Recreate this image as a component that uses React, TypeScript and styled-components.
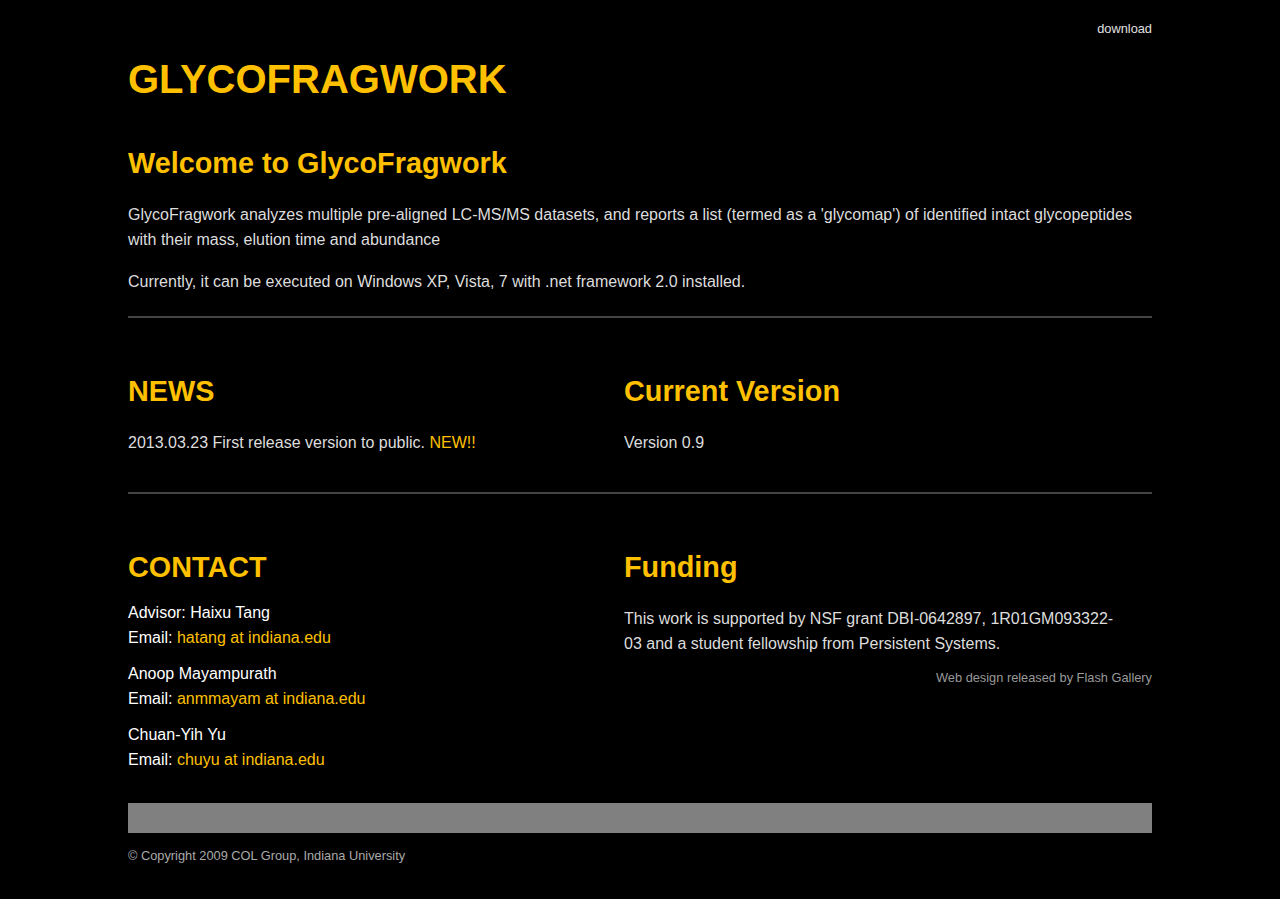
import styled, { createGlobalStyle } from "styled-components";

const GlobalStyle = createGlobalStyle`
    html, body {
        margin: 0;
        padding: 0;
        background: #000;
    }
    body {
        font-family: "Liberation Sans", Arial, Helvetica, sans-serif;
        color: #dddddd;
    }
`;

const Page = styled.div`
    width: 1024px;
    margin: 0 auto;
    padding: 21px 0 30px;
`;

const TopBar = styled.div`
    display: flex;
    justify-content: flex-end;
    height: 16px;
    font-size: 12.8px;
    line-height: 16px;
`;

const TopLink = styled.a`
    color: #e0e0e0;
    text-decoration: none;
`;

const Title = styled.h1`
    margin: 19px 0 0;
    font-size: 40px;
    line-height: 46px;
    font-weight: bold;
    color: #ffc000;
`;

const Heading = styled.h2<{ $gap?: number }>`
    margin: 0 0 ${({ $gap = 23 }) => $gap}px;
    font-size: 28.8px;
    line-height: 32px;
    font-weight: bold;
    color: #ffc000;
`;

const Section = styled.section<{ $top?: number }>`
    padding-top: ${({ $top = 57 }) => $top}px;
`;

const Text = styled.p`
    margin: 0 0 17px;
    font-size: 16px;
    line-height: 25px;
    color: #dddddd;
    &:last-child {
        margin-bottom: 0;
    }
`;

const Highlight = styled.a`
    color: #ffc000;
    text-decoration: none;
`;

const Divider = styled.hr<{ $top: number }>`
    margin: ${({ $top }) => $top}px 0 0;
    border: 0;
    height: 2px;
    background: #444;
`;

const Columns = styled.div`
    display: grid;
    grid-template-columns: 496px 528px;
`;

const Column = styled.div``;

const ContactEntry = styled.p`
    margin: 0 0 11px;
    font-size: 16px;
    line-height: 25px;
    color: #fff;
    &:last-child {
        margin-bottom: 0;
    }
`;

const FundingText = styled(Text)`
    max-width: 496px;
    margin-bottom: 14px;
`;

const Credit = styled.div`
    text-align: right;
    font-size: 12.8px;
    line-height: 16px;
    color: #999;
`;

const FooterBar = styled.div`
    margin-top: 31px;
    height: 30px;
    background: #808080;
`;

const Copyright = styled.div`
    margin-top: 15px;
    font-size: 12.8px;
    line-height: 16px;
    color: #aaa;
`;

const contacts = [
    { name: "Advisor: Haixu Tang", email: "hatang at indiana.edu" },
    { name: "Anoop Mayampurath", email: "anmmayam at indiana.edu" },
    { name: "Chuan-Yih Yu", email: "chuyu at indiana.edu" },
];

export default function App() {
    return (
        <>
            <GlobalStyle />
            <Page>
                <TopBar>
                    <TopLink href="#">download</TopLink>
                </TopBar>
                <Title>GLYCOFRAGWORK</Title>

                <Section $top={45}>
                    <Heading>Welcome to GlycoFragwork</Heading>
                    <Text>
                        GlycoFragwork analyzes multiple pre-aligned LC-MS/MS datasets, and reports a list (termed as a
                        'glycomap') of identified intact glycopeptides with their mass, elution time and abundance
                    </Text>
                    <Text>Currently, it can be executed on Windows XP, Vista, 7 with .net framework 2.0 installed.</Text>
                </Section>
                <Divider $top={22} />

                <Section>
                    <Columns>
                        <Column>
                            <Heading>NEWS</Heading>
                            <Text>
                                2013.03.23 First release version to public. <Highlight href="#">NEW!!</Highlight>
                            </Text>
                        </Column>
                        <Column>
                            <Heading>Current Version</Heading>
                            <Text>Version 0.9</Text>
                        </Column>
                    </Columns>
                </Section>
                <Divider $top={37} />

                <Section>
                    <Columns>
                        <Column>
                            <Heading $gap={17}>CONTACT</Heading>
                            {contacts.map((c) => (
                                <ContactEntry key={c.email}>
                                    {c.name}
                                    <br />
                                    Email: <Highlight href="#">{c.email}</Highlight>
                                </ContactEntry>
                            ))}
                        </Column>
                        <Column>
                            <Heading>Funding</Heading>
                            <FundingText>
                                This work is supported by NSF grant DBI-0642897, 1R01GM093322-03 and a student
                                fellowship from Persistent Systems.
                            </FundingText>
                            <Credit>Web design released by Flash Gallery</Credit>
                        </Column>
                    </Columns>
                </Section>

                <FooterBar />
                <Copyright>© Copyright 2009 COL Group, Indiana University</Copyright>
            </Page>
        </>
    );
}
